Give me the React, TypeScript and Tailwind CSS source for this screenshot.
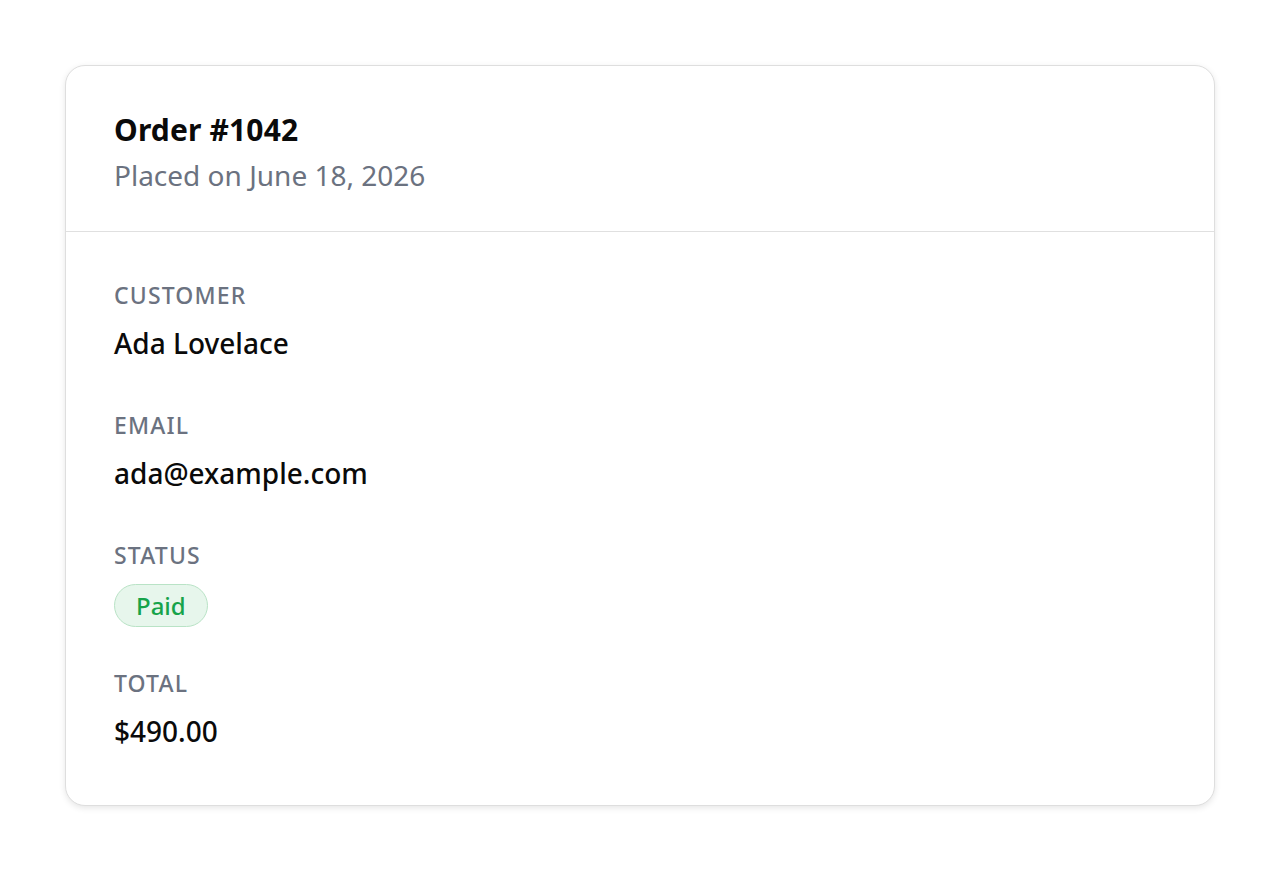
import React from "react";

interface FieldProps {
  label: string;
  children: React.ReactNode;
}

const Label = ({ children }: { children: React.ReactNode }) => (
  <div className="text-[23px] leading-[32px] font-medium tracking-[0.05em] text-[#6b7280] uppercase">
    {children}
  </div>
);

const Field = ({ label, children }: FieldProps) => (
  <div>
    <Label>{label}</Label>
    <div className="mt-3 text-[28px] leading-[40px] font-medium text-[#0a0a0a]">{children}</div>
  </div>
);

export default function App() {
  return (
    <div
      className="min-h-screen bg-white px-[65px] pt-[65px]"
      style={{ fontFamily: '"Noto Sans", "Open Sans", sans-serif' }}
    >
      <div className="w-[1150px] rounded-[20px] border border-[#dedede] bg-white shadow-[0_2px_6px_rgba(0,0,0,0.1)]">
        {/* header */}
        <div className="px-12 pt-[46px] pb-[38px] border-b border-[#e0e0e0]">
          <h1 className="text-[30px] leading-[36px] font-bold tracking-[0.005em] text-[#0a0a0a]">Order #1042</h1>
          <p className="mt-[9px] text-[28px] leading-[36px] text-[#6b7280]">Placed on June 18, 2026</p>
        </div>

        {/* details */}
        <div className="px-12 pt-[47px] pb-[54px]">
          <Field label="Customer">Ada Lovelace</Field>
          <div className="mt-[46px]">
            <Field label="Email">ada@example.com</Field>
          </div>
          <div className="mt-[46px]">
            <Label>Status</Label>
            <span className="mt-[13px] inline-flex h-[43px] items-center rounded-full border border-[#b9e3c6] bg-[#e7f6ec] px-[21px] text-[24px] font-medium text-[#16a34a]">
              Paid
            </span>
          </div>
          <div className="mt-[40px]">
            <Field label="Total">$490.00</Field>
          </div>
        </div>
      </div>
    </div>
  );
}
